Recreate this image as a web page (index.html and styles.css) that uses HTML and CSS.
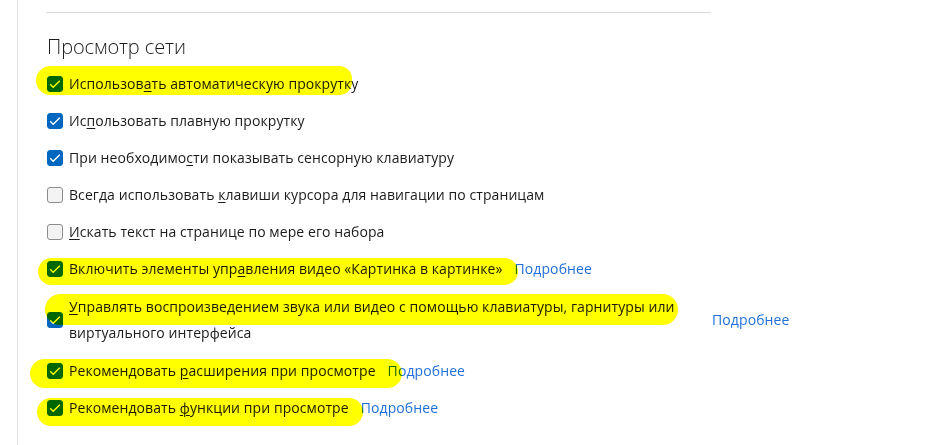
FILE: index.html
```html
<!DOCTYPE html>
<html lang="ru">
<head>
<meta charset="utf-8">
<link rel="stylesheet" href="styles.css">
</head>
<body>
<div class="page">
  <div class="section">
    <h2 class="heading">Просмотр сети</h2>
    <div class="list">
      <div class="row"><span class="box on"><svg viewBox="0 0 14 14"><path d="M2.2 7.3l3 3 6.6-6.6"/></svg></span><span class="label">Использов<u>а</u>ть автоматическую прокрутку</span></div>
      <div class="row"><span class="box on"><svg viewBox="0 0 14 14"><path d="M2.2 7.3l3 3 6.6-6.6"/></svg></span><span class="label">Ис<u>п</u>ользовать плавную прокрутку</span></div>
      <div class="row"><span class="box on"><svg viewBox="0 0 14 14"><path d="M2.2 7.3l3 3 6.6-6.6"/></svg></span><span class="label">При необходимо<u>с</u>ти показывать сенсорную клавиатуру</span></div>
      <div class="row"><span class="box"></span><span class="label">Всегда использовать <u>к</u>лавиши курсора для навигации по страницам</span></div>
      <div class="row"><span class="box"></span><span class="label"><u>И</u>скать текст на странице по мере его набора</span></div>
      <div class="row"><span class="box on"><svg viewBox="0 0 14 14"><path d="M2.2 7.3l3 3 6.6-6.6"/></svg></span><span class="label">Включить элементы упр<u>а</u>вления видео «Картинка в картинке»</span><a class="link">Подробнее</a></div>
      <div class="row tall"><span class="box on"><svg viewBox="0 0 14 14"><path d="M2.2 7.3l3 3 6.6-6.6"/></svg></span><span class="label wrap"><u>У</u>правлять воспроизведением звука или видео с помощью клавиатуры, гарнитуры или виртуального интерфейса</span><a class="link">Подробнее</a></div>
      <div class="row"><span class="box on"><svg viewBox="0 0 14 14"><path d="M2.2 7.3l3 3 6.6-6.6"/></svg></span><span class="label">Рекомендовать <u>р</u>асширения при просмотре</span><a class="link">Подробнее</a></div>
      <div class="row"><span class="box on"><svg viewBox="0 0 14 14"><path d="M2.2 7.3l3 3 6.6-6.6"/></svg></span><span class="label">Рекомендовать <u>ф</u>ункции при просмотре</span><a class="link">Подробнее</a></div>
    </div>
  </div>
  <span class="mark m1"></span>
  <span class="mark m2"></span>
  <span class="mark m3"></span>
  <span class="mark m4"></span>
  <span class="mark m5"></span>
</div>
</body>
</html>
```
FILE: styles.css
```css
html, body {
  margin: 0;
  padding: 0;
  background: #ffffff;
}
body {
  font-family: "Open Sans", "Noto Sans", sans-serif;
  color: #1b1b1b;
  width: 933px;
  height: 445px;
  overflow: hidden;
}
.page {
  position: relative;
  margin-left: 17px;
  border-left: 1px solid #e5e5e5;
  height: 445px;
  padding-left: 28px;
  padding-top: 12px;
  box-sizing: border-box;
}
.section {
  width: 664px;
  border-top: 1px solid #d9d9d9;
  padding-left: 1px;
}
.heading {
  margin: 20px 0 0 0;
  font-size: 20px;
  font-weight: 300;
  line-height: 28px;
  color: #1b1b1b;
  letter-spacing: -0.1px;
}
.list {
  margin-top: 4px;
  display: flex;
  flex-direction: column;
  width: 900px;
}
.row {
  display: flex;
  align-items: center;
  min-height: 37px;
  font-size: 14px;
  line-height: 20px;
}
.row.tall {
  min-height: 65px;
}
.box {
  width: 16px;
  height: 16px;
  box-sizing: border-box;
  border-radius: 3px;
  border: 1px solid #8c8c8c;
  background: #f3f3f3;
  margin-right: 6px;
  flex: none;
  display: flex;
}
.box.on {
  background: #0067c0;
  border-color: #0067c0;
}
.box svg {
  width: 14px;
  height: 14px;
}
.box path {
  fill: none;
  stroke: #ffffff;
  stroke-width: 1.3;
}
.label {
  letter-spacing: 0.08px;
}
.label.wrap {
  width: 630px;
  line-height: 26px;
}
.label u {
  text-decoration-thickness: 1px;
  text-underline-offset: 2px;
}
.link {
  margin-left: 12px;
  color: #1f6fd6;
  letter-spacing: 0.1px;
}
.row.tall .link {
  margin-left: 13px;
}
.mark {
  position: absolute;
  background: #ffff00;
  mix-blend-mode: multiply;
  border-radius: 15px;
}
.m1 { left: 18px; top: 66px; width: 316px; height: 29px; border-radius: 16px 14px 14px 16px; }
.m2 { left: 20px; top: 258px; width: 480px; height: 27px; }
.m3 { left: 27px; top: 294px; width: 633px; height: 31px; border-radius: 16px; }
.m4 { left: 12px; top: 359px; width: 372px; height: 29px; }
.m5 { left: 19px; top: 398px; width: 326px; height: 28px; }
```
